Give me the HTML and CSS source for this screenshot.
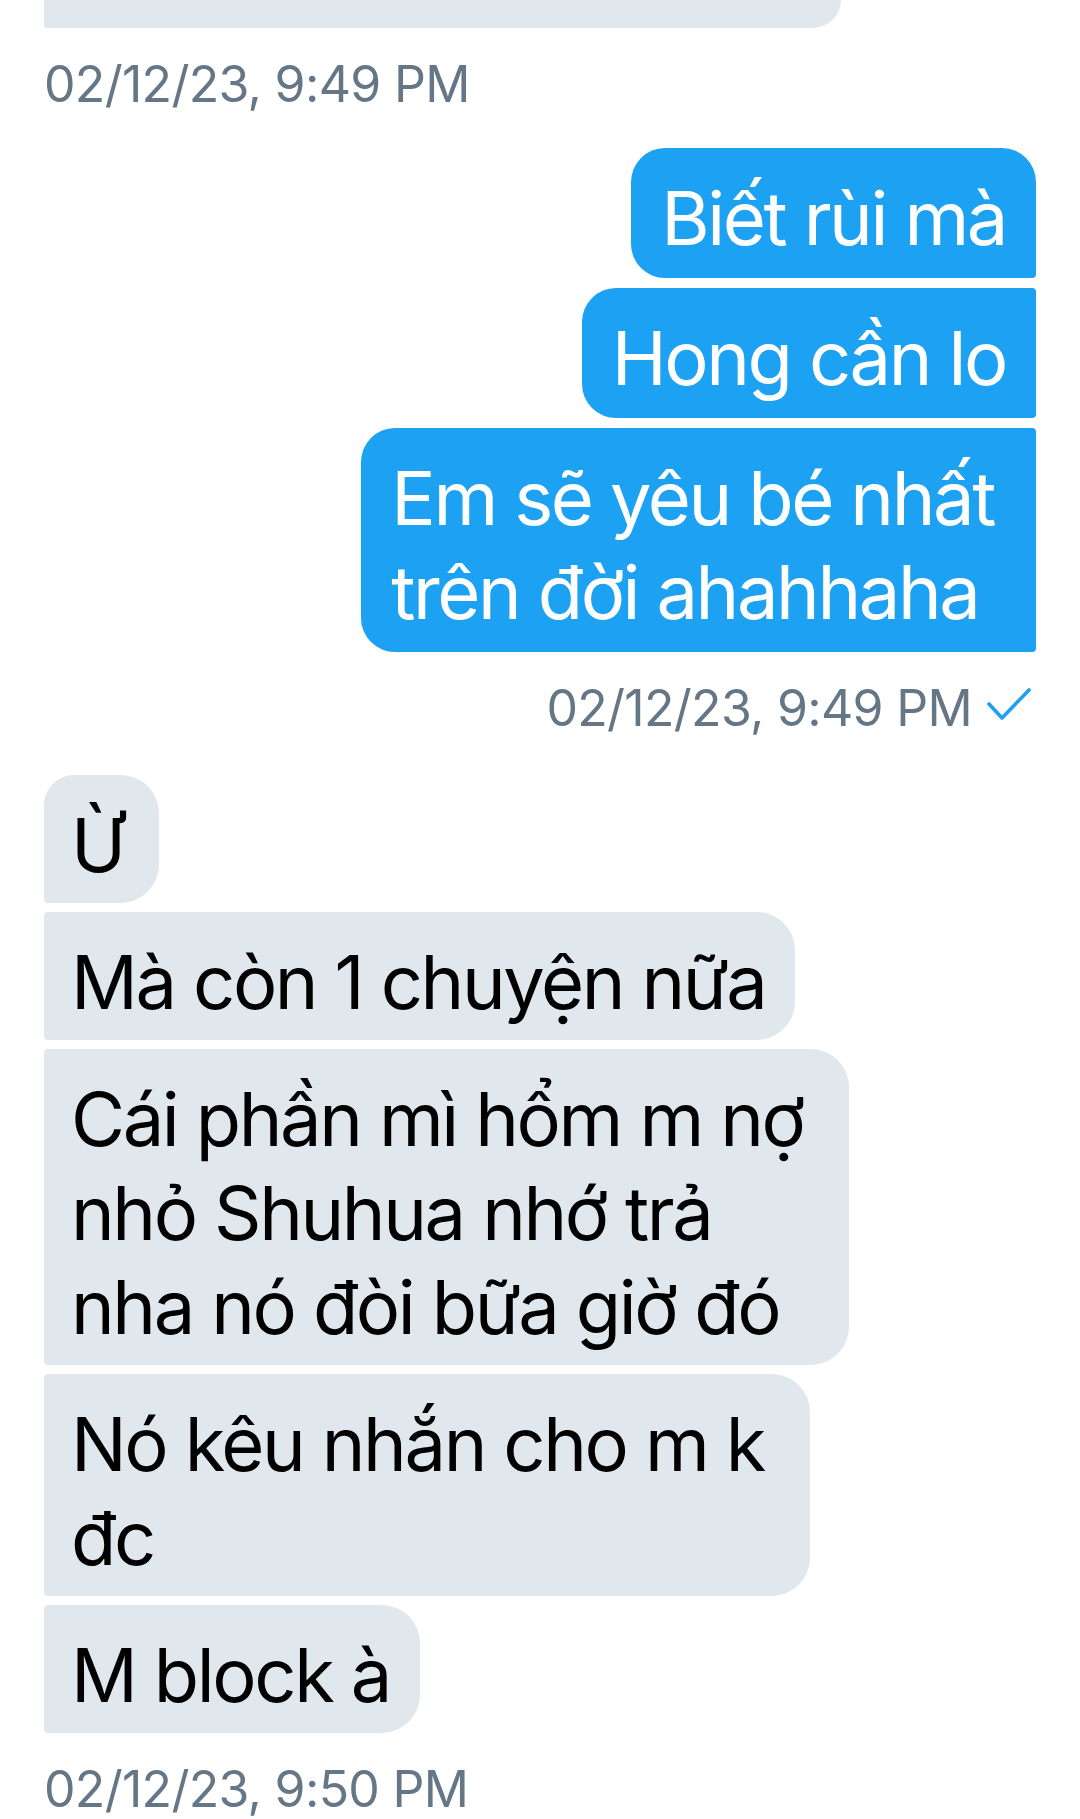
FILE: index.html
```html
<!DOCTYPE html>
<html lang="vi">
<head>
<meta charset="utf-8">
<title>Tin nhắn</title>
<link rel="stylesheet" href="styles.css">
</head>
<body>
<main class="chat">
  <div class="bubble recv cut"></div>
  <div class="stamp">02/12/23, 9:49 PM</div>

  <div class="group sent-group">
    <div class="bubble sent s-first">Biết rùi mà</div>
    <div class="bubble sent s-mid">Hong cần lo</div>
    <div class="bubble sent s-last multi">Em sẽ yêu bé nhất<br>trên đời ahahhaha</div>
  </div>
  <div class="stamp stamp-right">02/12/23, 9:49 PM
    <svg class="check" width="46" height="36" viewBox="0 0 46 36"><polyline points="3,17 16,31 43,3" fill="none" stroke="#1da1f2" stroke-width="3.6" stroke-linecap="round" stroke-linejoin="round"/></svg>
  </div>

  <div class="group recv-group">
    <div class="bubble recv r-first wide">Ừ</div>
    <div class="bubble recv r-mid">Mà còn 1 chuyện nữa</div>
    <div class="bubble recv r-mid multi">Cái phần mì hổm m nợ<br>nhỏ Shuhua nhớ trả<br>nha nó đòi bữa giờ đó</div>
    <div class="bubble recv r-mid multi">Nó kêu nhắn cho m k<br>đc</div>
    <div class="bubble recv r-last">M block à</div>
  </div>
  <div class="stamp">02/12/23, 9:50 PM</div>
</main>
</body>
</html>
```

FILE: styles.css
```css
html, body {
  margin: 0;
  padding: 0;
  background: #ffffff;
}

.chat {
  width: 1080px;
  box-sizing: border-box;
  padding: 0 44px;
  display: flex;
  flex-direction: column;
  font-family: "Inter", "Liberation Sans", sans-serif;
}

.group {
  display: flex;
  flex-direction: column;
}

.sent-group {
  align-items: flex-end;
  gap: 10px;
  margin-top: 34px;
}

.recv-group {
  align-items: flex-start;
  gap: 9px;
  margin-top: 37px;
}

.bubble {
  font-size: 74px;
  line-height: 94px;
  letter-spacing: -2.4px;
  white-space: nowrap;
  border-radius: 34px;
}

.sent {
  background: #1da1f2;
  color: #ffffff;
  padding: 23px 30px 13px;
}

.recv {
  background: #e1e8ed;
  color: #000000;
  padding: 23px 30px 11px 27px;
}

.bubble.multi {
  padding-right: 42px;
}

.recv.multi {
  padding-right: 46px;
}

.bubble.wide {
  padding-right: 36px;
}

.s-first { border-radius: 34px 34px 4px 34px; }
.s-mid   { border-radius: 34px 4px 4px 34px; }
.s-last  { border-radius: 34px 4px 4px 34px; }

.r-first { border-radius: 30px 38px 38px 4px; }
.r-mid   { border-radius: 4px 38px 38px 4px; }
.r-last  { border-radius: 4px 38px 38px 4px; }

.bubble.cut {
  align-self: flex-start;
  width: 797px;
  height: 28px;
  padding: 0;
  box-sizing: border-box;
  border-radius: 0 0 38px 4px;
}

.stamp {
  font-size: 50px;
  line-height: 60px;
  letter-spacing: -0.7px;
  color: #657786;
  margin-top: 26px;
  display: flex;
  align-items: center;
}

.stamp-right {
  align-self: flex-end;
  gap: 14px;
  padding-right: 4px;
}

.check {
  display: block;
  margin-top: -6px;
}
```
